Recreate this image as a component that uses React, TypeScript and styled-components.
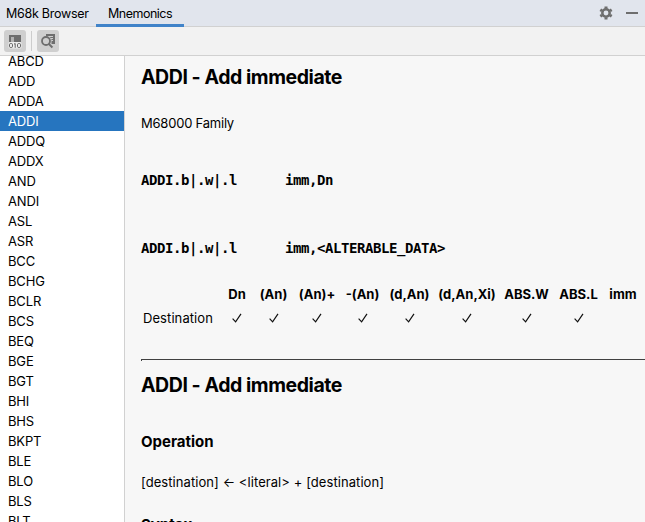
import React from "react";
import styled, { createGlobalStyle } from "styled-components";

const GlobalStyle = createGlobalStyle`
  html, body { margin: 0; height: 100%; overflow: hidden; }
  * { box-sizing: border-box; }
`;

const Window = styled.div`
  display: flex;
  flex-direction: column;
  width: 100%;
  height: 100vh;
  overflow: hidden;
  background: #f7f7f7;
  color: #000;
  font: 13px/20px Inter, sans-serif;
`;

const Header = styled.header`
  display: flex;
  flex: none;
  height: 27px;
  background: #e1e5ed;
  box-shadow: inset 0 -1px #d1d1d1;
  font-size: 12.5px;
  line-height: 28px;
  white-space: nowrap;
`;

const Title = styled.div`
  width: 96px;
  padding-left: 6px;
  letter-spacing: -0.27px;
`;

const Tab = styled.div`
  width: 88px;
  height: 27px;
  padding-left: 12px;
  border-bottom: 3px solid #4083c9;
  letter-spacing: -0.5px;
`;

const HeaderActions = styled.div`
  display: flex;
  align-items: center;
  gap: 12px;
  height: 26px;
  margin-left: auto;
  padding-right: 6px;
`;

const Toolbar = styled.div`
  display: flex;
  flex: none;
  align-items: center;
  height: 29px;
  padding: 0 4px 1px;
  background: #f2f2f2;
  border-bottom: 1px solid #d1d1d1;
`;

const ToolButton = styled.button`
  display: grid;
  place-items: center;
  width: 22px;
  height: 22px;
  padding: 0;
  border: 0;
  border-radius: 3px;
  background: #cfcfcf;
`;

const Separator = styled.div`
  width: 1px;
  height: 20px;
  margin: 0 5px;
  background: #cdcdcd;
`;

const Main = styled.div`
  display: flex;
  flex: 1;
  min-height: 0;
`;

const List = styled.ul`
  flex: none;
  width: 125px;
  margin: 0;
  padding: 0;
  overflow: hidden;
  list-style: none;
  background: #fff;
  border-right: 1px solid #d1d1d1;
  letter-spacing: -0.15px;
`;

const Item = styled.li<{ $selected: boolean }>`
  height: 20px;
  padding-left: 8px;
  line-height: 21px;
  color: ${(p) => (p.$selected ? "#fff" : "#000")};
  background: ${(p) => (p.$selected ? "#2675bf" : "transparent")};
  &:first-child { margin-top: -5px; }
`;

const Doc = styled.article`
  flex: 1;
  min-width: 0;
  padding: 8px 0 0 16px;
  overflow: hidden;
  white-space: nowrap;
`;

const Heading = styled.h1`
  height: 26px;
  margin: 0;
  font-size: 19.5px;
  font-weight: 700;
  line-height: 26px;
  letter-spacing: -0.44px;
`;

const SubHeading = styled.h2<{ $top: number }>`
  height: 20px;
  margin: ${(p) => p.$top}px 0 0;
  font-size: 15px;
  font-weight: 700;
  line-height: 20px;
`;

const Text = styled.p<{ $top: number; $spacing: number }>`
  height: 20px;
  margin: ${(p) => p.$top}px 0 0;
  letter-spacing: ${(p) => p.$spacing}px;
`;

const Syntax = styled.pre<{ $top: number }>`
  height: 20px;
  margin: ${(p) => p.$top}px 0 0;
  font: 700 14px/20px "DejaVu Sans Mono", monospace;
  letter-spacing: -0.428px;
`;

const Modes = styled.div`
  display: grid;
  grid-template-columns: 79px 34px 39px 48px 43px 51px 64px 55px 49px 40px;
  grid-template-rows: 24px 24px;
  margin-top: 24px;
  line-height: 24px;
  text-align: center;
`;

const ModeName = styled.div`
  font-weight: 700;
`;

const RowName = styled.div`
  padding-left: 2px;
  text-align: left;
  letter-spacing: 0.08px;
`;

const Mark = styled.div`
  display: grid;
  place-items: center;
`;

const Rule = styled.hr`
  height: 2px;
  margin: 29px 0 11px;
  border: solid #404040;
  border-width: 1px 0 0 1px;
`;

const Gear = () => (
  <svg width="14" height="14" viewBox="0 0 14 14" fill="none" stroke="#6e6e6e">
    <circle cx="7" cy="7" r="3.7" strokeWidth="2.5" />
    <path
      d="M7 .4v2M7 11.6v2M1.3 3.7l1.7 1M11 9.3l1.7 1M1.3 10.3l1.7-1M11 4.7l1.7-1"
      strokeWidth="3"
    />
  </svg>
);

const Minimize = () => (
  <svg width="14" height="14" viewBox="0 0 14 14">
    <path d="M1 6h12v2H1z" fill="#6e6e6e" />
  </svg>
);

const BinaryIcon = () => (
  <svg width="16" height="16" viewBox="0 0 16 16" fill="none">
    <path d="M2 2h12v7H7V4H4v5H2z" fill="#6e6e6e" />
    <path d="M4 4h3v5H4z" fill="#b2b2b2" />
    <rect x="1.5" y="9" width="13" height="6.5" rx="1.5" fill="#eee" />
    <g stroke="#555" strokeWidth="0.9">
      <rect x="2.5" y="10.5" width="3" height="4" rx="1.2" />
      <path d="M7 11.2l1.2-.7v4.3" />
      <rect x="10.5" y="10.5" width="3" height="4" rx="1.2" />
    </g>
  </svg>
);

const FindDocIcon = () => (
  <svg width="16" height="16" viewBox="0 0 16 16" fill="none">
    <path d="M6 1h9v10h-3.5V9A4.9 4.9 0 0 0 6 3.1z" fill="#6e6e6e" />
    <path d="M8 3.5h5M10.5 5.5H13M11.5 7.5H13" stroke="#cfcfcf" />
    <circle cx="6" cy="8" r="4" stroke="#6e6e6e" strokeWidth="1.8" />
    <path d="M8.8 10.9l3.6 3.6" stroke="#6e6e6e" strokeWidth="2" />
  </svg>
);

const Check = () => (
  <svg width="10" height="10" viewBox="0 0 10 10" fill="none" stroke="#111" strokeWidth="1.2">
    <path d="M.6 5.6L3.6 8.8L9 .8" />
  </svg>
);

const mnemonics =
  "ABCD ADD ADDA ADDI ADDQ ADDX AND ANDI ASL ASR BCC BCHG BCLR BCS BEQ BGE BGT BHI BHS BKPT BLE BLO BLS BLT".split(" ");

const modes = [
  { name: "Dn", allowed: true },
  { name: "(An)", allowed: true },
  { name: "(An)+", allowed: true },
  { name: "-(An)", allowed: true },
  { name: "(d,An)", allowed: true },
  { name: "(d,An,Xi)", allowed: true },
  { name: "ABS.W", allowed: true },
  { name: "ABS.L", allowed: true },
  { name: "imm", allowed: false },
];

export default function App() {
  return (
    <Window>
      <GlobalStyle />
      <Header>
        <Title>M68k Browser</Title>
        <Tab>Mnemonics</Tab>
        <HeaderActions>
          <Gear />
          <Minimize />
        </HeaderActions>
      </Header>
      <Toolbar>
        <ToolButton><BinaryIcon /></ToolButton>
        <Separator />
        <ToolButton><FindDocIcon /></ToolButton>
      </Toolbar>
      <Main>
        <List>
          {mnemonics.map((m) => (
            <Item key={m} $selected={m === "ADDI"}>{m}</Item>
          ))}
        </List>
        <Doc>
          <Heading>ADDI - Add immediate</Heading>
          <Text $top={23} $spacing={-0.22}>M68000 Family</Text>
          <Syntax $top={37}>{"ADDI.b|.w|.l      imm,Dn"}</Syntax>
          <Syntax $top={48}>{"ADDI.b|.w|.l      imm,<ALTERABLE_DATA>"}</Syntax>
          <Modes>
            <span />
            {modes.map((m) => <ModeName key={m.name}>{m.name}</ModeName>)}
            <RowName>Destination</RowName>
            {modes.map((m) => <Mark key={m.name}>{m.allowed && <Check />}</Mark>)}
          </Modes>
          <Rule />
          <Heading>ADDI - Add immediate</Heading>
          <SubHeading $top={34}>Operation</SubHeading>
          <Text $top={20} $spacing={0.07}>[destination] ← &lt;literal&gt; + [destination]</Text>
          <SubHeading $top={23}>Syntax</SubHeading>
        </Doc>
      </Main>
    </Window>
  );
}
